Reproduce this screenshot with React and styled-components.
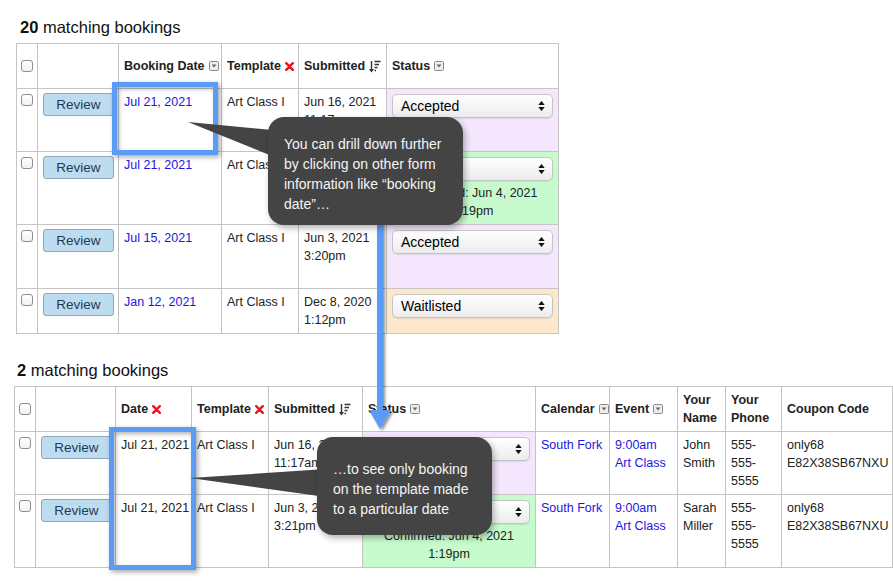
import styled, { createGlobalStyle } from "styled-components";

const GlobalStyle = createGlobalStyle`
  body {
    margin: 0;
    background: #fff;
    font-family: "Liberation Sans", Arial, Helvetica, sans-serif;
  }
`;

const Page = styled.div`
  position: relative;
  width: 893px;
  height: 581px;
  overflow: hidden;
  padding-top: 17px;
  box-sizing: border-box;
`;

const Section = styled.section`
  padding-left: ${(p) => p.$left}px;
  margin-bottom: ${(p) => p.$after || 0}px;
`;

const Heading = styled.h2`
  margin: 0 0 ${(p) => p.$gap}px ${(p) => p.$shift}px;
  font-size: 16.5px;
  line-height: 20px;
  font-weight: normal;
  color: #111;
  b {
    font-weight: bold;
  }
`;

const Table = styled.table`
  border-collapse: collapse;
  table-layout: fixed;
  width: ${(p) => p.$width}px;
`;

const Col = styled.col`
  width: ${(p) => p.$w}px;
`;

const Row = styled.tr`
  height: ${(p) => p.$h}px;
`;

const Th = styled.th`
  border: 1px solid #c5c5c5;
  padding: 0 5px;
  text-align: left;
  vertical-align: middle;
  font-size: 12.5px;
  line-height: 18px;
  font-weight: bold;
  color: #222;
  white-space: nowrap;
`;

const CheckTh = styled(Th)`
  padding-left: 4px;
`;

const Td = styled.td`
  border: 1px solid #c5c5c5;
  padding: ${(p) => p.$pad || "4px 5px"};
  vertical-align: top;
  font-size: 12.5px;
  line-height: 18px;
  color: #222;
  background: ${(p) => p.$bg || "transparent"};
  text-align: ${(p) => (p.$center ? "center" : "left")};
  white-space: nowrap;
`;

const Link = styled.a`
  color: #1c16e0;
  text-decoration: none;
`;

const HeadLabel = styled.span`
  display: inline-flex;
  align-items: center;
  gap: 4px;
`;

const Check = styled.span`
  display: block;
  width: 12px;
  height: 12px;
  box-sizing: border-box;
  border: 1px solid #8e8e8e;
  border-radius: 3px;
  background: linear-gradient(#fff, #f1f1f1);
`;

const ReviewButton = styled.button`
  display: block;
  width: 71px;
  height: 23px;
  padding: 0;
  background: #bedcef;
  border: 1px solid #8ea6b6;
  border-radius: 3px;
  font-family: inherit;
  font-size: 13.5px;
  color: #1f3a56;
`;

const SelectBox = styled.div`
  display: flex;
  align-items: center;
  justify-content: space-between;
  height: 24px;
  box-sizing: border-box;
  padding: 0 7px 0 8px;
  margin: 1px 0 3px;
  background: linear-gradient(#ffffff, #ececec);
  border: 1px solid #c4c4c4;
  border-radius: 5px;
  box-shadow: 0 1px 1px rgba(0, 0, 0, 0.08);
  font-size: 14px;
  color: #000;
  text-align: left;
`;

const Highlight = styled.div`
  position: absolute;
  left: ${(p) => p.$x}px;
  top: ${(p) => p.$y}px;
  width: ${(p) => p.$w}px;
  height: ${(p) => p.$h}px;
  box-sizing: border-box;
  border: 5px solid #5a9bf6;
  box-shadow: 2px 2px 5px rgba(0, 0, 0, 0.35),
    inset 2px 2px 4px rgba(0, 0, 0, 0.3);
`;

const Callout = styled.div`
  position: absolute;
  left: ${(p) => p.$x}px;
  top: ${(p) => p.$y}px;
  width: ${(p) => p.$w}px;
  height: ${(p) => p.$h}px;
  box-sizing: border-box;
  padding: ${(p) => p.$pad};
  background: #444;
  border-radius: 16px;
  color: #f4f4f4;
  font-size: 14px;
  line-height: 20px;
  box-shadow: 2px 3px 6px rgba(0, 0, 0, 0.3);
`;

const Annotations = styled.svg`
  position: absolute;
  left: 0;
  top: 0;
  pointer-events: none;
`;

const FilterIcon = () => (
  <svg width="10" height="10" viewBox="0 0 10 10">
    <rect x="0.5" y="0.5" width="9" height="9" rx="1" fill="#ededed" stroke="#8a8a8a" />
    <polygon points="2.6,3.6 7.4,3.6 5,6.6" fill="#666" />
  </svg>
);

const RemoveIcon = () => (
  <svg width="9" height="9" viewBox="0 0 9 9">
    <path d="M1.2 1.2 L7.8 7.8 M7.8 1.2 L1.2 7.8" stroke="#e8141c" strokeWidth="2.4" strokeLinecap="round" />
  </svg>
);

const SortIcon = () => (
  <svg width="12" height="13" viewBox="0 0 12 13">
    <path d="M2.5 1 V10.5" stroke="#333" strokeWidth="1.4" />
    <polygon points="0,9 5,9 2.5,12.5" fill="#333" />
    <path d="M5.5 1.5 H11.5 M5.5 4.5 H10 M5.5 7.5 H8.5 M5.5 10.5 H7" stroke="#333" strokeWidth="1.3" />
  </svg>
);

const UpDown = () => (
  <svg width="7" height="12" viewBox="0 0 7 12">
    <polygon points="0.3,5 3.5,1 6.7,5" fill="#111" />
    <polygon points="0.3,7 3.5,11 6.7,7" fill="#111" />
  </svg>
);

const Select = ({ value }) => (
  <SelectBox>
    <span>{value}</span>
    <UpDown />
  </SelectBox>
);

const Status = ({ value, note }) => (
  <>
    <Select value={value} />
    {note}
  </>
);

const colors = {
  accepted: "#f4e6fc",
  confirmed: "#c7fbcd",
  waitlisted: "#fde8cc",
};

const firstRows = [
  { h: 63, date: "Jul 21, 2021", sub: ["Jun 16, 2021", "11:17am"], status: "Accepted", bg: colors.accepted },
  { h: 73, date: "Jul 21, 2021", sub: ["Jun 3, 2021", "3:21pm"], status: "Accepted", bg: colors.confirmed, note: true },
  { h: 64, date: "Jul 15, 2021", sub: ["Jun 3, 2021", "3:20pm"], status: "Accepted", bg: colors.accepted },
  { h: 44, date: "Jan 12, 2021", sub: ["Dec 8, 2020", "1:12pm"], status: "Waitlisted", bg: colors.waitlisted },
];

const secondRows = [
  { h: 63, sub: ["Jun 16, 2021", "11:17am"], bg: colors.accepted, name: ["John", "Smith"] },
  { h: 72, sub: ["Jun 3, 2021", "3:21pm"], bg: colors.confirmed, note: true, name: ["Sarah", "Miller"] },
];

const ConfirmNote = () => (
  <>
    Confirmed: Jun 4, 2021
    <br />
    1:19pm
  </>
);

const CheckCell = () => (
  <Td $pad="5px 0 0 4px">
    <Check />
  </Td>
);

const App = () => {
  return (
    <>
      <GlobalStyle />
      <Page>
        <Section $left={16} $after={26}>
          <Heading $shift={4} $gap={6}>
            <b>20</b> matching bookings
          </Heading>
          <Table $width={542}>
            <colgroup>
              {[21, 81, 103, 77, 88, 172].map((w, i) => (
                <Col key={i} $w={w} />
              ))}
            </colgroup>
            <thead>
              <Row $h={45}>
                <CheckTh>
                  <Check />
                </CheckTh>
                <Th />
                <Th>
                  <HeadLabel>
                    Booking Date <FilterIcon />
                  </HeadLabel>
                </Th>
                <Th>
                  <HeadLabel>
                    Template <RemoveIcon />
                  </HeadLabel>
                </Th>
                <Th>
                  <HeadLabel>
                    Submitted <SortIcon />
                  </HeadLabel>
                </Th>
                <Th>
                  <HeadLabel>
                    Status <FilterIcon />
                  </HeadLabel>
                </Th>
              </Row>
            </thead>
            <tbody>
              {firstRows.map((r, i) => (
                <Row key={i} $h={r.h}>
                  <CheckCell />
                  <Td>
                    <ReviewButton>Review</ReviewButton>
                  </Td>
                  <Td>
                    <Link>{r.date}</Link>
                  </Td>
                  <Td>Art Class I</Td>
                  <Td>
                    {r.sub[0]}
                    <br />
                    {r.sub[1]}
                  </Td>
                  <Td $bg={r.bg} $center>
                    <Status value={r.status} note={r.note && <ConfirmNote />} />
                  </Td>
                </Row>
              ))}
            </tbody>
          </Table>
        </Section>

        <Section $left={14}>
          <Heading $shift={3} $gap={6}>
            <b>2</b> matching bookings
          </Heading>
          <Table $width={878}>
            <colgroup>
              {[21, 80, 76, 77, 94, 173, 74, 68, 48, 56, 111].map((w, i) => (
                <Col key={i} $w={w} />
              ))}
            </colgroup>
            <thead>
              <Row $h={45}>
                <CheckTh>
                  <Check />
                </CheckTh>
                <Th />
                <Th>
                  <HeadLabel>
                    Date <RemoveIcon />
                  </HeadLabel>
                </Th>
                <Th>
                  <HeadLabel>
                    Template <RemoveIcon />
                  </HeadLabel>
                </Th>
                <Th>
                  <HeadLabel>
                    Submitted <SortIcon />
                  </HeadLabel>
                </Th>
                <Th>
                  <HeadLabel>
                    Status <FilterIcon />
                  </HeadLabel>
                </Th>
                <Th>
                  <HeadLabel>
                    Calendar <FilterIcon />
                  </HeadLabel>
                </Th>
                <Th>
                  <HeadLabel>
                    Event <FilterIcon />
                  </HeadLabel>
                </Th>
                <Th>
                  Your
                  <br />
                  Name
                </Th>
                <Th>
                  Your
                  <br />
                  Phone
                </Th>
                <Th>Coupon Code</Th>
              </Row>
            </thead>
            <tbody>
              {secondRows.map((r, i) => (
                <Row key={i} $h={r.h}>
                  <CheckCell />
                  <Td>
                    <ReviewButton>Review</ReviewButton>
                  </Td>
                  <Td>Jul 21, 2021</Td>
                  <Td>Art Class I</Td>
                  <Td>
                    {r.sub[0]}
                    <br />
                    {r.sub[1]}
                  </Td>
                  <Td $bg={r.bg} $center>
                    <Status value="Accepted" note={r.note && <ConfirmNote />} />
                  </Td>
                  <Td>
                    <Link>South Fork</Link>
                  </Td>
                  <Td>
                    <Link>
                      9:00am
                      <br />
                      Art Class
                    </Link>
                  </Td>
                  <Td>
                    {r.name[0]}
                    <br />
                    {r.name[1]}
                  </Td>
                  <Td>
                    555-
                    <br />
                    555-
                    <br />
                    5555
                  </Td>
                  <Td>
                    only68
                    <br />
                    E82X38SB67NXU
                  </Td>
                </Row>
              ))}
            </tbody>
          </Table>
        </Section>

        <Highlight $x={112} $y={82} $w={106} $h={73} />
        <Highlight $x={109} $y={427} $w={87} $h={143} />

        <Annotations width="893" height="581" viewBox="0 0 893 581">
          <defs>
            <filter id="arrowShadow" x="-50%" y="-10%" width="200%" height="120%">
              <feDropShadow dx="2" dy="2" stdDeviation="1.5" floodColor="#000" floodOpacity="0.45" />
            </filter>
          </defs>
          <g filter="url(#arrowShadow)">
            <rect x="377" y="220" width="6" height="192" fill="#5a9bf6" />
            <polygon points="369,410 391,410 380,429" fill="#5a9bf6" />
          </g>
          <polygon points="188,122 282,131 282,160" fill="#444" />
          <polygon points="190,478 326,469 326,497" fill="#444" />
        </Annotations>

        <Callout $x={268} $y={117} $w={195} $h={108} $pad="17px 10px 0 16px">
          You can drill down further
          <br />
          by clicking on other form
          <br />
          information like “booking
          <br />
          date”…
        </Callout>
        <Callout $x={317} $y={437} $w={175} $h={98} $pad="22px 8px 0 16px">
          …to see only booking
          <br />
          on the template made
          <br />
          to a particular date
        </Callout>
      </Page>
    </>
  );
};

export default App;
